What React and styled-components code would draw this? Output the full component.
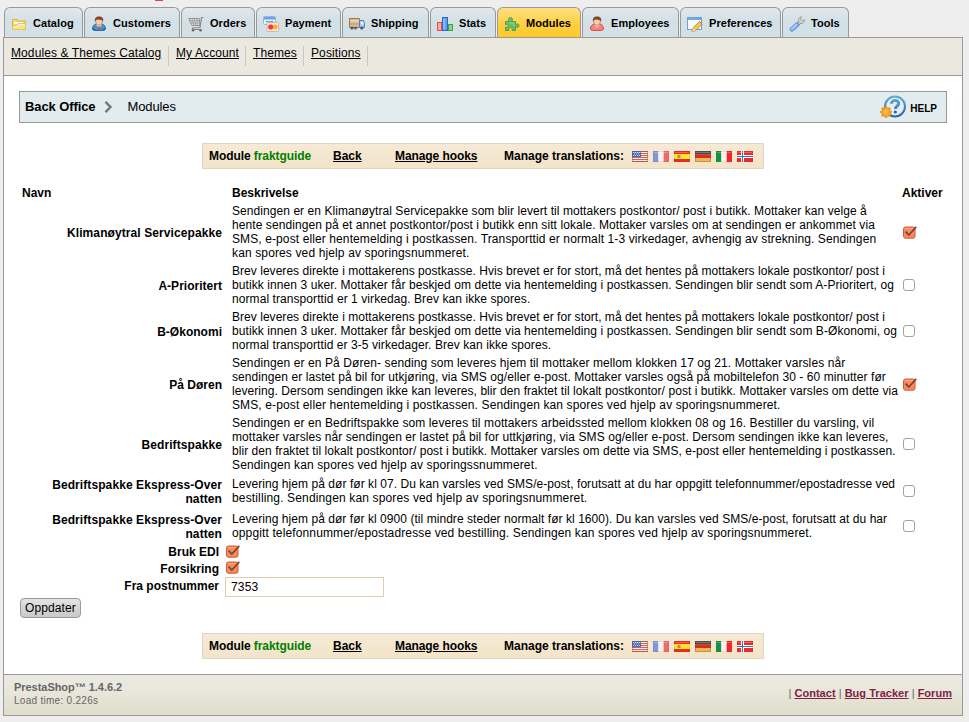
import React from "react";
import styled, { createGlobalStyle } from "styled-components";

const GlobalStyle = createGlobalStyle`
  *, *::before, *::after { box-sizing: border-box; }
  html, body { margin: 0; padding: 0; background: #eee; }
  body { font: 12px/14px "Liberation Sans", Arial, sans-serif; color: #000; overflow: hidden; }
`;

const Page = styled.div`
  width: 969px;
  height: 722px;
  padding-left: 3px;
  display: flex;
  flex-direction: column;
  background: #eee;
  white-space: nowrap;
`;
const TopStrip = styled.div`
  height: 7px;
  flex: none;
  padding-left: 152px;
`;
const Notice = styled.div`
  width: 8px;
  height: 1px;
  background: #dd4455;
`;
const Tabs = styled.nav`
  display: flex;
  gap: 1px;
  height: 30px;
  flex: none;
  padding-left: 1px;
`;
const Tab = styled.a`
  display: flex;
  align-items: center;
  width: ${(p) => p.$w}px;
  height: 30px;
  padding: 1px 0 0 6px;
  gap: 6px;
  border: 1px solid #999;
  border-bottom: 0;
  border-radius: 6px 6px 0 0;
  background: ${(p) =>
    p.$active
      ? "linear-gradient(#ffe184, #ffcf40 55%, #ffc928)"
      : "linear-gradient(#e2e8ea, #d3e0e6 45%, #d3e0e6)"};
  font-size: 11px;
  letter-spacing: 0.05px;
  font-weight: bold;
  svg { flex: none; margin-top: 2px; }
`;
const Shell = styled.div`
  width: 960px;
  height: 679px;
  border: 1px solid #999;
  background: #fff;
  display: flex;
  flex-direction: column;
`;
const SubMenu = styled.ul`
  margin: 0;
  padding: 8px 0 0 7px;
  list-style: none;
  display: flex;
  flex: none;
  height: 38px;
  background: #ebe9df;
  border-bottom: 1px solid #999;
`;
const SubItem = styled.li`
  height: 20px;
  width: ${(p) => p.$w}px;
  border-right: 1px solid #c9c8bd;
  margin-right: 7px;
  letter-spacing: 0.1px;
  a { text-decoration: underline; }
`;
const Content = styled.main`
  flex: 1;
  display: flex;
  flex-direction: column;
  padding: 15px 15px 0;
`;
const Crumb = styled.div`
  display: flex;
  align-items: center;
  height: 32px;
  width: 928px;
  flex: none;
  padding: 0 9px 1px 5px;
  border: 1px solid #999;
  background: #e2ebee;
  font-size: 13px;
  letter-spacing: -0.1px;
  svg { flex: none; }
`;
const CrumbArrow = styled.svg`
  margin: 1px 14px 0 9px;
`;
const Help = styled.div`
  display: flex;
  align-items: center;
  gap: 4px;
  margin-left: auto;
  font-size: 10px;
  letter-spacing: 0;
  font-weight: bold;
  padding-top: 1px;
  span { padding-top: 3px; }
`;
const Toolbar = styled.div`
  display: flex;
  align-items: center;
  flex: none;
  width: 562px;
  height: 26px;
  margin: ${(p) => p.$top}px 0 0 183px;
  padding: 0 0 1px 6px;
  border: 1px solid #dfd5c3;
  background: linear-gradient(#f6ead6, #f3e4c8);
  font-weight: bold;
`;
const ToolCell = styled.span`
  width: ${(p) => p.$w}px;
  text-decoration: ${(p) => (p.$link ? "underline" : "none")};
  letter-spacing: ${(p) => (p.$tight ? "-0.08px" : "normal")};
  em { font-style: normal; color: #008000; }
`;
const Flags = styled.span`
  display: flex;
  gap: 5px;
  padding-top: 1px;
`;
const Table = styled.section`
  margin-top: 16px;
  display: flex;
  flex-direction: column;
`;
const Row = styled.div`
  display: grid;
  grid-template-columns: 203px 10px 671px 40px;
  align-items: center;
  height: ${(p) => p.$h}px;
  padding-bottom: ${(p) => (p.$h === 35 ? 1 : 0)}px;
`;
const Head = styled(Row)`
  padding: 0 0 2px 3px;
  grid-template-columns: 210px 670px 60px;
  font-weight: bold;
  height: 17px;
`;
const Name = styled.div`
  text-align: right;
  font-weight: bold;
  padding-top: 2px;
  letter-spacing: ${(p) => (p.$wide ? "0.09px" : "0.02px")};
  grid-column: 1;
`;
const Description = styled.div`
  grid-column: 3;
`;
const Line = styled.div`
  height: 14px;
  letter-spacing: ${(p) => (p.$track ? `${p.$track}px` : "inherit")};
`;
const Box = styled.span`
  display: block;
  width: 12px;
  height: 12px;
  border: 1px solid #a5a299;
  border-radius: 3px;
  background: #fff;
`;
const Option = styled.div`
  display: flex;
  height: ${(p) => p.$h}px;
  svg { margin-top: ${(p) => p.$markTop}px; }
`;
const OptionLabel = styled.label`
  width: 200px;
  margin-right: ${(p) => p.$gap || 6}px;
  text-align: right;
  font-weight: bold;
  padding-top: ${(p) => p.$pad}px;
`;
const Postcode = styled.input`
  width: 159px;
  height: 20px;
  margin: 0;
  padding: 0 5px;
  border: 1px solid #dfcdb2;
  background: #fff;
  font: 12px "Liberation Sans", Arial, sans-serif;
  letter-spacing: 0.2px;
  outline: 0;
`;
const Button = styled.button`
  width: 61px;
  height: 20px;
  flex: none;
  margin: 1px 0 0 1px;
  padding: 0;
  border: 1px solid #999;
  border-radius: 4px;
  background: linear-gradient(#e4e4e4, #d5d5d5 50%, #c9c9c9);
  font: 12px "Liberation Sans", Arial, sans-serif;
  letter-spacing: 0.1px;
  color: #000;
`;
const Footer = styled.footer`
  display: flex;
  justify-content: space-between;
  flex: none;
  height: 41px;
  padding: 6px 10px 0;
  border-top: 1px solid #999;
  background: linear-gradient(#ebeae1, #e8e7dc 40%, #dfddc8);
  color: #666;
  font-size: 10px;
  line-height: 13px;
  letter-spacing: 0.28px;
`;
const Version = styled.div`
  strong { display: block; font-size: 11px; letter-spacing: -0.04px; }
`;
const FootLinks = styled.div`
  padding-top: 6px;
  font-size: 11px;
  letter-spacing: 0.03px;
  a { color: #812143; font-weight: bold; text-decoration: underline; }
`;

function Icon({ name }) {
  const p = { width: 16, height: 16, viewBox: "0 0 16 16" };
  switch (name) {
    case "catalog":
      return (
        <svg {...p}>
          <path d="M1.500 13.500v-10h4.500l1 1.500h7.500v8.500z" fill="#f6d678" stroke="#e0b040" />
          <path d="M3 6h9v2H3z" fill="#fff" />
          <path d="M1.500 13.500v-3.500h4l1.500-2.500h7.500v6z" fill="#fbe08a" stroke="#eac35a" />
          <path d="M2.500 11h3.500l1.500-2.300h6" fill="none" stroke="#fff8d0" />
        </svg>
      );
    case "customers":
    case "employees": {
      const c = name === "customers";
      return (
        <svg {...p}>
          <path d="M1.500 13.500c0-4 2-5.500 4.500-5.500h4c2.500 0 4.500 1.500 4.500 5.500l-2 1h-9z" fill={c ? "#4f8fc9" : "#f98178"} stroke={c ? "#2e6da8" : "#d54d47"} />
          <path d="M5 8.500h6l-3 4z" fill={c ? "#dceaf5" : "#fbb8ad"} />
          {c && <path d="M7.500 10h1l.5 3-1 1-1-1z" fill="#d44538" />}
          {c && <path d="M2 12l3 2H2zM14 12l-3 2h3z" fill="#255f99" />}
          <ellipse cx="8" cy="5.500" rx="3.300" ry="3.800" fill="#f6cfaf" stroke="#a3704d" strokeWidth=".6" />
          <path d="M4 6C3.300 2 5 .5 8 .5s5 1.500 4 5.500l-1-2-5-.5-1 .5z" fill="#84421f" />
        </svg>
      );
    }
    case "orders":
      return (
        <svg {...p}>
          <path d="M.8 2.500h10.500l.7 7H4z" fill="#dcdcda" stroke="#929290" />
          <path d="M1.500 4.800h10M2.600 7h9M4 3l1.800 6M6.500 3l1 6M9 3l.5 6" stroke="#929290" strokeWidth=".7" />
          <path d="M15.500 1.500h-2l-1.500 10-7.500.5v1.500h9" fill="none" stroke="#888" strokeWidth="1.200" />
          <circle cx="5" cy="14.200" r="1.200" fill="#666" /><circle cx="12.500" cy="14.200" r="1.200" fill="#666" />
        </svg>
      );
    case "payment":
      return (
        <svg {...p}>
          <rect x=".5" y=".5" width="12" height="8" rx="1" fill="#e7f1fa" stroke="#91b5df" />
          <path d="M1 1h11v2.500H1z" fill="#6da4e0" /><path d="M3 5.500h7" stroke="#5e87ba" strokeDasharray="2 .5" />
          <rect x="4" y="6.500" width="11.500" height="9" rx="1" fill="#fbe9dc" stroke="#d8b3a1" />
          <rect x="5.200" y="8.500" width="5" height="5" rx="2" fill="#ed3941" /><rect x="10" y="8.500" width="4.500" height="5" rx="2" fill="#f7b52d" />
        </svg>
      );
    case "shipping":
      return (
        <svg {...p}>
          <path d="M.5 2.500h10v9H.5z" fill="#e4bb83" stroke="#9a7652" />
          <path d="M1 5h9" stroke="#fae2b9" /><path d="M1 8h9" stroke="#78a5cf" />
          <path d="M10.500 4.500h4l1 3v4h-5z" fill="#a3c8f1" stroke="#5480b3" />
          <path d="M12 5.500h2l.5 3H12z" fill="#eff8ff" />
          <circle cx="3" cy="12" r="1.600" fill="#555" /><circle cx="6.500" cy="12" r="1.600" fill="#666" /><circle cx="12.800" cy="12" r="1.600" fill="#555" />
        </svg>
      );
    case "stats":
      return (
        <svg {...p}>
          <rect x=".5" y="6.500" width="4" height="8" fill="#fba9a4" stroke="#e84b53" />
          <rect x="5.500" y="1.500" width="5" height="13" fill="#659fe8" stroke="#2869c8" />
          <rect x="11.500" y="8.500" width="4" height="6" fill="#92cf8f" stroke="#45a146" />
          <path d="M7 2.500v11" stroke="#b2d4fb" />
        </svg>
      );
    case "modules":
      return (
        <svg {...p}>
          <path d="M1.500 5.500h4c-2-2-.8-4 1-4s3 2 1 4h4v3.200c2-1.500 3.500-.5 3.500 1s-1.500 2.300-3.500 1v3.800H8c1-2-.3-3-1.700-3S4 12.500 5 14.500H1.500v-3.300c2 .5 2.700-.4 2.700-1.400S3.300 8 1.500 8.700z" fill="#6dba68" stroke="#4fa052" />
          <path d="M5 7h5v3" fill="none" stroke="#9bd67e" />
        </svg>
      );
    case "preferences":
      return (
        <svg {...p}>
          <rect x=".5" y="1.500" width="14" height="12" fill="#f5faff" stroke="#709fd7" />
          <path d="M1 2h13v2H1z" fill="#72a9ed" />
          <path d="M5 15.500l1.200-3.800 6.300-6.200 2.700 2.600-6.400 6.400z" fill="#f8c552" stroke="#b87628" strokeWidth=".8" />
          <path d="M5 15.500l1.200-3.500 2.500 2.400z" fill="#efd9b4" /><path d="M12.500 5.500l2.700 2.600" stroke="#d46b54" />
        </svg>
      );
    case "tools":
      return (
        <svg {...p}>
          <path d="M8 9l3.300-3.500" stroke="#858585" strokeWidth="4" />
          <path d="M8 9l3.300-3.500" stroke="#ddd" strokeWidth="2.500" />
          <path d="M12.500.7l-1.200 2.500 1.800 1.700 2.400-1.200c.3 2.800-2 4.400-4.500 3.300C8.400 5.500 9.300 1.400 12.500.7z" fill="#d8d8d5" stroke="#8f8f8d" strokeWidth=".8" />
          <path d="M3 13.300L8 8.700" stroke="#658fdc" strokeWidth="4.600" strokeLinecap="round" />
          <path d="M3 13L7.500 8.700" stroke="#a8c4f8" strokeWidth="2.600" strokeLinecap="round" />
        </svg>
      );
    default:
      return null;
  }
}

function HelpIcon() {
  return (
    <svg width="26" height="24" viewBox="0 0 26 24">
      <defs>
        <linearGradient id="ring" gradientUnits="userSpaceOnUse" x1="0" y1="1" x2="0" y2="22"><stop stopColor="#5faed0" /><stop offset="1" stopColor="#315f9f" /></linearGradient>
        <radialGradient id="sun"><stop stopColor="#ffd164" /><stop offset="1" stopColor="#f49a22" /></radialGradient>
      </defs>
      <circle cx="15" cy="11.500" r="10" fill="#e2eef5" stroke="url(#ring)" strokeWidth="2" />
      <path d="M11.500 8.800c0-4.600 7.500-4.200 7.200-.2-.2 2.500-3.400 2.600-3.400 5.400" fill="none" stroke="url(#ring)" strokeWidth="2.800" />
      <circle cx="15.300" cy="17" r="1.600" fill="#315f9f" />
      <g stroke="#f09419" strokeWidth="3" strokeLinecap="round">
        <path d="M6 12.500v9M1.500 17h9M2.800 13.800l6.400 6.400M9.200 13.800l-6.400 6.400" />
      </g>
      <circle cx="6" cy="17" r="4" fill="url(#sun)" />
    </svg>
  );
}

function Flag({ code }) {
  const stripes = (colors, vertical) =>
    colors.map((c, i) =>
      vertical ? <rect key={i} x={i * 5.333} width="5.400" height="11" fill={c} /> : <rect key={i} y={i * 3.667} width="16" height="3.700" fill={c} />
    );
  return (
    <svg width="16" height="11" viewBox="0 0 16 11">
      {code === "us" && (
        <>
          <rect width="16" height="11" fill="#f7e8e3" />
          <path d="M0 .5h16M0 2.500h16M0 4.500h16M0 6.500h16M0 8.500h16M0 10.500h16" stroke="#cf6256" />
          <rect width="9" height="6" fill="#426dbb" />
          <path d="M1 1.500h7M2 3h6M1 4.500h7" stroke="#bad2f0" strokeDasharray="1 1" />
        </>
      )}
      {code === "fr" && stripes(["#7f98dc", "#f5f1ed", "#ee6a6c"], true)}
      {code === "es" && (
        <>
          <rect width="16" height="11" fill="#ee2a1c" /><rect y="3" width="16" height="5" fill="#ffe32d" />
          <rect x="3.500" y="4" width="3" height="3" fill="#ce8742" />
        </>
      )}
      {code === "de" && stripes(["#4e4944", "#df2a20", "#f0b84a"])}
      {code === "it" && stripes(["#159345", "#f8f3ee", "#f52429"], true)}
      {code === "no" && (
        <>
          <rect width="16" height="11" fill="#ee2a2d" />
          <path d="M5.500 0v11M0 5.500h16" stroke="#fff" strokeWidth="3" />
          <path d="M5.500 0v11M0 5.500h16" stroke="#3975bc" />
        </>
      )}
      <rect x=".5" y=".5" width="15" height="10" fill="none" stroke="#6b4b43" opacity={code === "us" || code === "de" ? 0.35 : 0.12} />
      <path d="M1 1.500h14" stroke="#fff" opacity=".25" />
    </svg>
  );
}

function Check() {
  return (
    <svg width="14" height="13" viewBox="0 0 14 13">
      <rect x=".5" y="1" width="11.500" height="11.200" rx="2" fill="#f98a5e" stroke="#cf5a35" />
      <path d="M2 2.500h8" stroke="#ffa781" />
      <path d="M2.600 5.600l3.200 3.500L13.300.9" fill="none" stroke="#7c4433" strokeWidth="1.700" />
    </svg>
  );
}

const tabs = [
  ["catalog", "Catalog", 79],
  ["customers", "Customers", 96],
  ["orders", "Orders", 74],
  ["payment", "Payment", 85],
  ["shipping", "Shipping", 87],
  ["stats", "Stats", 66],
  ["modules", "Modules", 84],
  ["employees", "Employees", 97],
  ["preferences", "Preferences", 101],
  ["tools", "Tools", 67],
];

// Each description line carries the letter spacing that sets its measure.
const services = [
  { h: 60, name: ["Klimanøytral Servicepakke"], on: true, text: [
    ["Sendingen er en Klimanøytral Servicepakke som blir levert til mottakers postkontor/ post i butikk. Mottaker kan velge å", 0.066],
    ["hente sendingen på et annet postkontor/post i butikk enn sitt lokale. Mottaker varsles om at sendingen er ankommet via", 0.078],
    ["SMS, e-post eller hentemelding i postkassen. Transporttid er normalt 1-3 virkedager, avhengig av strekning. Sendingen", 0.107],
    ["kan spores ved hjelp av sporingsnummeret.", 0.13]] },
  { h: 46, name: ["A-Prioritert"], text: [
    ["Brev leveres direkte i mottakerens postkasse. Hvis brevet er for stort, må det hentes på mottakers lokale postkontor/ post i", 0.038],
    ["butikk innen 3 uker. Mottaker får beskjed om dette via hentemelding i postkassen. Sendingen blir sendt som A-Prioritert, og", 0.083],
    ["normal transporttid er 1 virkedag. Brev kan ikke spores.", 0.075]] },
  { h: 46, name: ["B-Økonomi"], text: [
    ["Brev leveres direkte i mottakerens postkasse. Hvis brevet er for stort, må det hentes på mottakers lokale postkontor/ post i", 0.038],
    ["butikk innen 3 uker. Mottaker får beskjed om dette via hentemelding i postkassen. Sendingen blir sendt som B-Økonomi, og", 0.083],
    ["normal transporttid er 3-5 virkedager. Brev kan ikke spores.", 0.072]] },
  { h: 60, name: ["På Døren"], on: true, text: [
    ["Sendingen er en På Døren- sending som leveres hjem til mottaker mellom klokken 17 og 21. Mottaker varsles når", 0.095],
    ["sendingen er lastet på bil for utkjøring, via SMS og/eller e-post. Mottaker varsles også på mobiltelefon 30 - 60 minutter før", 0.071],
    ["levering. Dersom sendingen ikke kan leveres, blir den fraktet til lokalt postkontor/ post i butikk. Mottaker varsles om dette via", 0.065],
    ["SMS, e-post eller hentemelding i postkassen. Sendingen kan spores ved hjelp av sporingsnummeret.", 0.12]] },
  { h: 60, name: ["Bedriftspakke"], text: [
    ["Sendingen er en Bedriftspakke som leveres til mottakers arbeidssted mellom klokken 08 og 16. Bestiller du varsling, vil", 0.1],
    ["mottaker varsles når sendingen er lastet på bil for uttkjøring, via SMS og/eller e-post. Dersom sendingen ikke kan leveres,", 0.083],
    ["blir den fraktet til lokalt postkontor/ post i butikk. Mottaker varsles om dette via SMS, e-post eller hentemelding i postkassen.", 0.056],
    ["Sendingen kan spores ved hjelp av sporingssnummeret.", 0.13]] },
  { h: 35, name: ["Bedriftspakke Ekspress-Over", "natten"], text: [
    ["Levering hjem på dør før kl 07. Du kan varsles ved SMS/e-post, forutsatt at du har oppgitt telefonnummer/epostadresse ved", 0.056],
    ["bestilling. Sendingen kan spores ved hjelp av sporingsnummeret.", 0.145]] },
  { h: 35, name: ["Bedriftspakke Ekspress-Over", "natten"], text: [
    ["Levering hjem på dør før kl 0900 (til mindre steder normalt før kl 1600). Du kan varsles ved SMS/e-post, forutsatt at du har", 0.05],
    ["oppgitt telefonnummer/epostadresse ved bestilling. Sendingen kan spores ved hjelp av sporingsnummeret.", 0.13]] },
];

function ModuleToolbar({ top }) {
  return (
    <Toolbar $top={top}>
      <ToolCell $w={124} $tight>Module <em>fraktguide</em></ToolCell>
      <ToolCell $w={62} $link>Back</ToolCell>
      <ToolCell $w={109} $link $tight>Manage hooks</ToolCell>
      <ToolCell $w={128}>Manage translations:</ToolCell>
      <Flags>
        {["us", "fr", "es", "de", "it", "no"].map((c) => <Flag key={c} code={c} />)}
      </Flags>
    </Toolbar>
  );
}

export default function App() {
  return (
    <Page>
      <GlobalStyle />
      <TopStrip><Notice /></TopStrip>
      <Tabs>
        {tabs.map(([id, label, w]) => (
          <Tab key={id} $w={w} $active={id === "modules"}>
            <Icon name={id} />{label}
          </Tab>
        ))}
      </Tabs>
      <Shell>
        <SubMenu>
          <SubItem $w={158}><a>Modules &amp; Themes Catalog</a></SubItem>
          <SubItem $w={70}><a>My Account</a></SubItem>
          <SubItem $w={51}><a>Themes</a></SubItem>
          <SubItem $w={57}><a>Positions</a></SubItem>
        </SubMenu>
        <Content>
          <Crumb>
            <strong>Back Office</strong>
            <CrumbArrow width="9" height="12" viewBox="0 0 9 12">
              <path d="M1.500 .8L6.500 6l-5 5.200" fill="none" stroke="#777" strokeWidth="2.400" />
            </CrumbArrow>
            Modules
            <Help><HelpIcon /><span>HELP</span></Help>
          </Crumb>
          <ModuleToolbar top={20} />
          <Table>
            <Head><span>Navn</span><span>Beskrivelse</span><span>Aktiver</span></Head>
            {services.map((s, i) => (
              <Row key={i} $h={s.h}>
                <Name $wide={s.name[0].length > 12}>{s.name.map((n) => <Line key={n}>{n}</Line>)}</Name>
                <Description>{s.text.map(([t, track]) => <Line key={t} $track={track}>{t}</Line>)}</Description>
                {s.on ? <Check /> : <Box />}
              </Row>
            ))}
          </Table>
          <Option $h={17} $markTop={1}><OptionLabel $gap={7} $pad={1}>Bruk EDI</OptionLabel><Check /></Option>
          <Option $h={16} $markTop={0}><OptionLabel $gap={7} $pad={1}>Forsikring</OptionLabel><Check /></Option>
          <Option $h={20}><OptionLabel $pad={2}>Fra postnummer</OptionLabel><Postcode defaultValue="7353" /></Option>
          <Button>Oppdater</Button>
          <ModuleToolbar top={15} />
        </Content>
        <Footer>
          <Version><strong>PrestaShop™ 1.4.6.2</strong>Load time: 0.226s</Version>
          <FootLinks>| <a>Contact</a> | <a>Bug Tracker</a> | <a>Forum</a></FootLinks>
        </Footer>
      </Shell>
    </Page>
  );
}
